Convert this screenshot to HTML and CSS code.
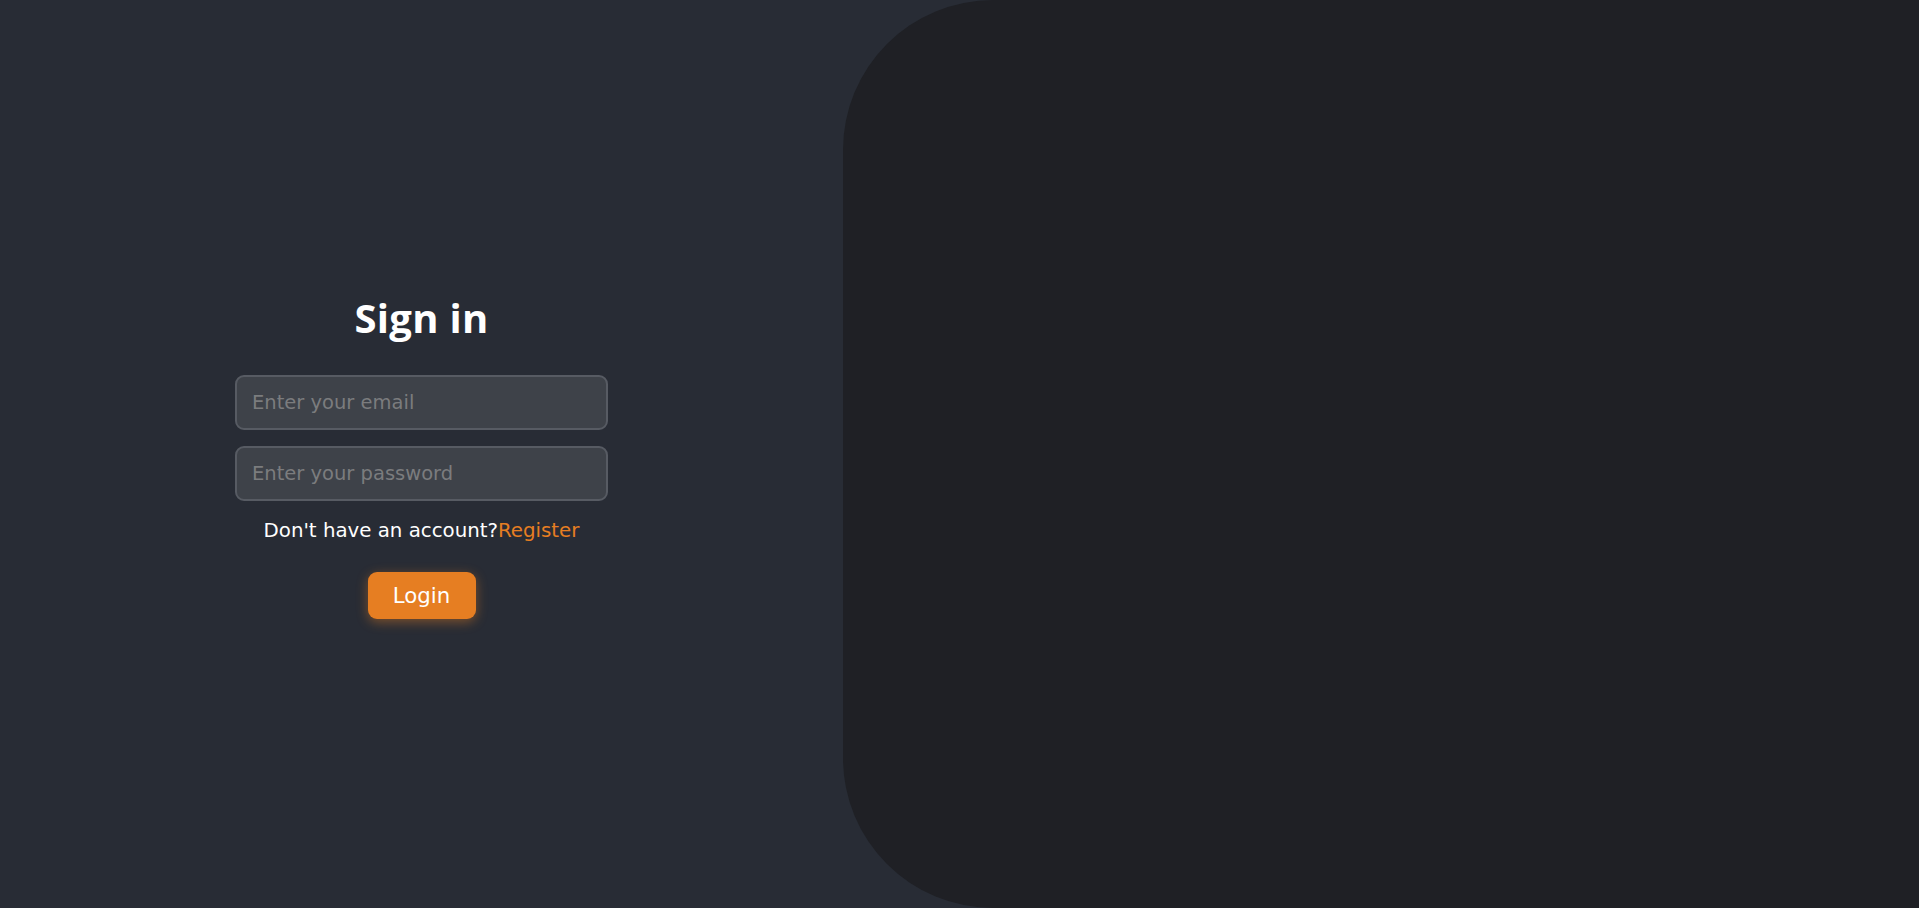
FILE: index.html
```html
<!DOCTYPE html>
<html lang="en">
<head>
<meta charset="utf-8">
<title>Sign in</title>
<link rel="stylesheet" href="styles.css">
</head>
<body>
<div class="page">
  <section class="auth">
    <form class="form">
      <h1 class="title">Sign in</h1>
      <input class="field" type="email" placeholder="Enter your email">
      <input class="field" type="password" placeholder="Enter your password">
      <p class="hint">Don't have an account?<a class="link" href="#">Register</a></p>
      <button class="btn" type="button">Login</button>
    </form>
  </section>
  <section class="panel"></section>
</div>
</body>
</html>
```

FILE: styles.css
```css
* { box-sizing: border-box; }
html, body { margin: 0; padding: 0; }
body {
  background: #282c35;
  font-family: "DejaVu Sans", "Open Sans", sans-serif;
  color: #fff;
  overflow: hidden;
}
.page {
  display: flex;
  height: 908px;
}
.auth {
  width: 843px;
  flex: none;
  display: flex;
  align-items: center;
  justify-content: center;
}
.form {
  width: 373px;
  display: flex;
  flex-direction: column;
  align-items: center;
  margin-top: 8px;
}
.title {
  margin: 0 0 37px;
  font-family: "Open Sans", sans-serif;
  font-size: 40px;
  line-height: 40px;
  font-weight: 700;
  letter-spacing: 0.3px;
}
.field {
  width: 100%;
  height: 55px;
  margin: 0 0 16px;
  padding: 0 15px;
  background: #3e4249;
  border: 2px solid #575b63;
  border-radius: 9px;
  color: #fff;
  font-family: inherit;
  font-size: 19.5px;
  outline: none;
}
.field::placeholder { color: #7b7c7e; }
.hint {
  margin: 1px 0 0;
  font-size: 19.8px;
  line-height: 26px;
}
.link {
  color: #e67e22;
  text-decoration: none;
}
.btn {
  margin-top: 28px;
  width: 108px;
  height: 47px;
  border: none;
  border-radius: 9px;
  background: #e67e22;
  color: #fff;
  font-family: inherit;
  font-size: 21.3px;
  box-shadow: 0 3px 12px rgba(230, 126, 34, 0.45);
  cursor: pointer;
}
.panel {
  flex: 1;
  background: #1f2025;
  border-radius: 150px 0 0 150px;
}
```
